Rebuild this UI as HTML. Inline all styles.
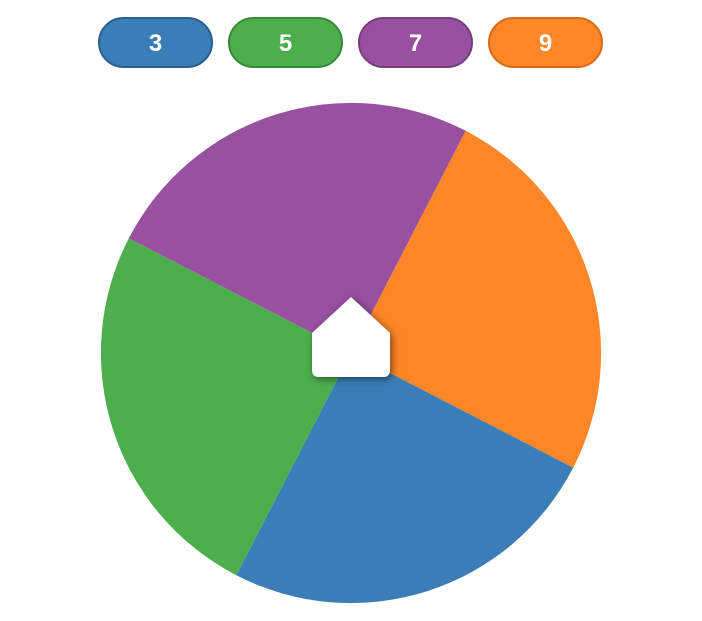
<!DOCTYPE html>
<html><head><style>
html,body{margin:0;padding:0;background:#fff;width:702px;height:621px;overflow:hidden}
.b{position:absolute;top:17px;width:115px;height:51px;box-sizing:border-box;border-radius:26px;border:2px solid;color:#fff;font:bold 24px "Liberation Sans",sans-serif;text-align:center;line-height:50px}
</style></head><body>
<div class="b" style="left:98px;background:#3b7db6;border-color:#2a5f8e">3</div>
<div class="b" style="left:228px;background:#4cae4c;border-color:#378a37">5</div>
<div class="b" style="left:358px;background:#98519f;border-color:#763d7c">7</div>
<div class="b" style="left:488px;background:#fd8628;border-color:#d86a17">9</div>
<svg width="702" height="621" style="position:absolute;left:0;top:0">
<defs><filter id="s" x="-50%" y="-50%" width="200%" height="200%"><feDropShadow dx="2" dy="2" stdDeviation="4" flood-color="#000" flood-opacity="0.5"/></filter></defs>
<path d="M351 353 L465.7 130.8 A250 250 0 0 1 573.2 467.7Z" fill="#fd8628"/>
<path d="M351 353 L573.2 467.7 A250 250 0 0 1 236.3 575.2Z" fill="#3b7db6"/>
<path d="M351 353 L236.3 575.2 A250 250 0 0 1 128.8 238.3Z" fill="#4cae4c"/>
<path d="M351 353 L128.8 238.3 A250 250 0 0 1 465.7 130.8Z" fill="#98519f"/>
<path d="M351 297 L390 333 L390 370 Q390 377 383 377 L319 377 Q312 377 312 370 L312 333 Z" fill="#fff" filter="url(#s)"/>
</svg>
</body></html>
